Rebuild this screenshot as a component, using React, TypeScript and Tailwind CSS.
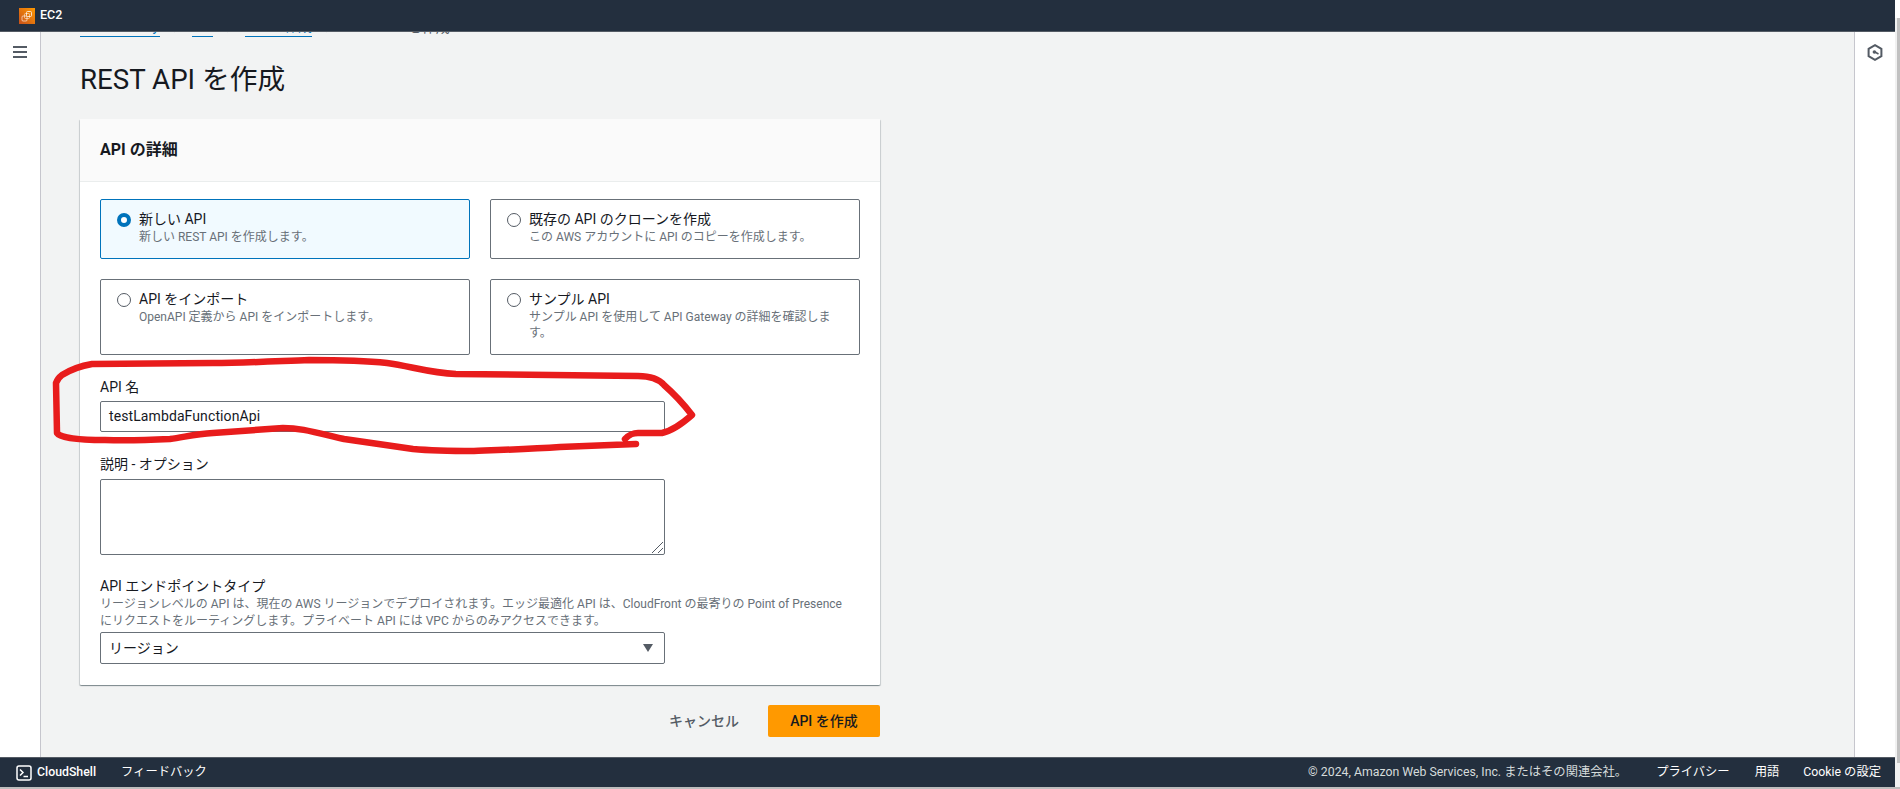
import React from "react";

const jp = { fontFamily: 'Roboto, "Noto Sans CJK JP", sans-serif' };

// orange EC2 service tile
const Ec2Logo = () => (
  <svg width="16" height="16" viewBox="0 0 16 16" aria-hidden="true">
    <defs>
      <linearGradient id="ec2" x1="0" y1="1" x2="1" y2="0">
        <stop offset="0" stopColor="#c8511b" />
        <stop offset="1" stopColor="#ff9900" />
      </linearGradient>
    </defs>
    <rect width="16" height="16" fill="url(#ec2)" />
    <rect x="7.5" y="3.5" width="5" height="5" rx="1" fill="none" stroke="#fff" strokeOpacity="0.75" />
    <rect x="5.5" y="5.5" width="5" height="5" rx="1" fill="none" stroke="#fff" strokeOpacity="0.5" />
    <rect x="3" y="8" width="5" height="5" rx="1" fill="none" stroke="#fff" strokeOpacity="0.6" />
  </svg>
);

const MenuIcon = () => (
  <svg width="14" height="12" viewBox="0 0 14 12" fill="#545b64" aria-hidden="true">
    <rect y="0" width="14" height="2" />
    <rect y="5" width="14" height="2" />
    <rect y="10" width="14" height="2" />
  </svg>
);

const HexIcon = () => (
  <svg width="16" height="17" viewBox="0 0 16 17" fill="none" stroke="#545b64" strokeWidth="2" aria-hidden="true">
    <path d="M8 1.2 14.4 4.8v7.4L8 15.8 1.6 12.2V4.8z" />
    <circle cx="7.4" cy="8" r="1.8" fill="#545b64" stroke="none" />
    <path d="M8 8 11.5 10" strokeWidth="1.5" />
  </svg>
);

const TerminalIcon = () => (
  <svg width="16" height="16" viewBox="0 0 16 16" fill="none" aria-hidden="true">
    <rect x="1" y="1" width="14" height="14" rx="2" fill="#232f3e" stroke="#fff" strokeWidth="1.5" />
    <path d="M4 4.5 7 7.5 4 10.5" stroke="#fff" strokeWidth="1.5" />
    <path d="M7.5 11.5H12" stroke="#fff" strokeWidth="1.5" />
  </svg>
);

const Chevron = () => (
  <svg width="12" height="12" viewBox="0 0 12 12" fill="none" stroke="#687078" strokeWidth="2" aria-hidden="true">
    <path d="M4 1.5 8.5 6 4 10.5" />
  </svg>
);

const RadioCard = ({
  title,
  desc,
  checked = false,
  className = "",
}: {
  title: string;
  desc: string;
  checked?: boolean;
  className?: string;
}) => (
  <div
    className={`flex gap-2 rounded-[2px] border px-[16px] pt-[9px] ${
      checked ? "border-[#0073bb] bg-[#f1faff]" : "border-[#687078] bg-white"
    } ${className}`}
  >
    <span
      className={`mt-[4px] h-[14px] w-[14px] shrink-0 rounded-full bg-white ${
        checked ? "border-[4px] border-[#0073bb]" : "border border-[#545b64]"
      }`}
    />
    <div className="min-w-0">
      <div className="text-[14px] leading-[20px] text-[#16191f]">{title}</div>
      <div className="text-[12px] leading-[16px] text-[#687078]">{desc}</div>
    </div>
  </div>
);

const inputBox = "w-[565px] rounded-[2px] border border-[#687078] bg-white";

export default function App() {
  return (
    <div style={jp} className="relative flex h-[789px] w-[1900px] flex-col overflow-hidden bg-[#bdbdbd]">
      <div className="flex h-[787px] shrink-0">
        <div className="flex w-[1895px] shrink-0 flex-col">
          <header className="flex h-[32px] shrink-0 items-center gap-[5px] border-b border-[#545b64] bg-[#232f3e] pl-[19px]">
            <Ec2Logo />
            <span className="text-[12.5px] font-medium text-white">EC2</span>
          </header>

          <div className="flex min-h-0 flex-1">
            <aside className="flex w-[41px] shrink-0 justify-center border-r border-[#c6c6cd] bg-white pt-[14px]">
              <MenuIcon />
            </aside>

            <main className="min-w-0 flex-1 overflow-hidden bg-[#f2f3f3] pl-[39px]">
              <nav className="-mt-[16px] flex h-[21px] items-center text-[14px] leading-[20px]">
                <a className="w-[80px] whitespace-nowrap border-b border-[#0073bb] text-[#0073bb]">API Gateway</a>
                <span className="mx-[10px]"><Chevron /></span>
                <a className="w-[21px] border-b border-[#0073bb] text-[#0073bb]">API</a>
                <span className="mx-[10px]"><Chevron /></span>
                <a className="w-[67px] whitespace-nowrap border-b border-[#0073bb] text-[#0073bb]">API を作成</a>
                <span className="mx-[10px]"><Chevron /></span>
                <span className="ml-[2px] text-[#545b64]">REST API を作成</span>
              </nav>

              <h1 className="mt-[25px] text-[27.7px] font-normal leading-[36px] text-[#16191f]">REST API を作成</h1>

              <section className="mt-[21px] w-[800px] rounded-[1px] bg-white shadow-[0_1px_1px_0_rgba(0,28,36,0.3),1px_1px_1px_0_rgba(0,28,36,0.15),-1px_1px_1px_0_rgba(0,28,36,0.15)]">
                <div className="flex h-[63px] items-center border-b border-[#eaeded] bg-[#fafafa] px-[20px]">
                  <h2 className="text-[16px] font-bold leading-[20px] text-[#16191f]">API の詳細</h2>
                </div>

                <div className="px-[20px] pb-[21px] pt-[17px]">
                  <div className="grid w-[760px] grid-cols-2 gap-x-[20px] gap-y-[20px]">
                    <RadioCard checked className="h-[60px]" title="新しい API" desc="新しい REST API を作成します。" />
                    <RadioCard className="h-[60px]" title="既存の API のクローンを作成" desc="この AWS アカウントに API のコピーを作成します。" />
                    <RadioCard className="h-[76px]" title="API をインポート" desc="OpenAPI 定義から API をインポートします。" />
                    <RadioCard className="h-[76px]" title="サンプル API" desc="サンプル API を使用して API Gateway の詳細を確認します。" />
                  </div>

                  <label className="mt-[22px] block text-[14px] leading-[20px] text-[#16191f]">API 名</label>
                  <div className={`${inputBox} mt-[4px] flex h-[31px] items-center px-[8px] text-[14px] tracking-[0.1px] text-[#16191f]`}>
                    testLambdaFunctionApi
                  </div>

                  <label className="mt-[22px] block text-[14px] leading-[20px] text-[#16191f]">説明 - オプション</label>
                  <div className={`${inputBox} relative mt-[5px] h-[76px]`}>
                    <svg className="absolute bottom-0 right-0" width="14" height="14" viewBox="0 0 14 14" stroke="#545b64" aria-hidden="true">
                      <path d="M2 13 13 2M8 13l5-5" />
                    </svg>
                  </div>

                  <label className="mt-[21px] block text-[14px] leading-[20px] text-[#16191f]">API エンドポイントタイプ</label>
                  <p className="w-[750px] text-[12px] leading-[17px] text-[#687078]">
                    リージョンレベルの API は、現在の AWS リージョンでデプロイされます。エッジ最適化 API は、CloudFront の最寄りの Point of Presence にリクエストをルーティングします。プライベート API には VPC からのみアクセスできます。
                  </p>
                  <div className={`${inputBox} mt-[2px] flex h-[32px] items-center justify-between px-[8px] text-[14px] text-[#16191f]`}>
                    <span>リージョン</span>
                    <span className="mr-[3px] h-0 w-0 border-x-[5px] border-t-[8px] border-x-transparent border-t-[#545b64]" />
                  </div>
                </div>
              </section>

              <div className="mt-[20px] flex w-[800px] items-center justify-end gap-[29px]">
                <span className="text-[14px] font-medium text-[#545b64]">キャンセル</span>
                <button className="h-[32px] w-[112px] rounded-[2px] bg-[#ff9900] text-[14px] font-medium text-[#16191f]">API を作成</button>
              </div>
            </main>

            <aside className="flex w-[41px] shrink-0 justify-center border-l border-[#c6c6cd] bg-white pt-[12px]">
              <HexIcon />
            </aside>
          </div>

          <footer className="flex h-[30px] shrink-0 items-center border-t border-[#545b64] bg-[#232f3e] pl-[16px] pr-[14px] text-[12.3px] text-[#d5dbdb]">
            <TerminalIcon />
            <span className="ml-[5px] font-medium text-white">CloudShell</span>
            <span className="ml-[25px] text-white">フィードバック</span>
            <span className="ml-auto">© 2024, Amazon Web Services, Inc. またはその関連会社。</span>
            <span className="ml-[29px] text-white">プライバシー</span>
            <span className="ml-[25px] text-white">用語</span>
            <span className="ml-[24px] text-white">Cookie の設定</span>
          </footer>
        </div>

        {/* browser scrollbar */}
        <div className="flex-1 bg-[#f1f1f1]">
          <div className="h-[18px] bg-white" />
          <div className="ml-[2px] h-[745px] bg-[#c1c1c1]" />
        </div>
      </div>

      {/* hand drawn red annotation over the form */}
      <svg className="pointer-events-none absolute left-0 top-0" width="1900" height="789" viewBox="0 0 1900 789" fill="none" aria-hidden="true">
        <path
          d="M625 439 C630 434 633 433 638 433 L662 433 C672 431 684 422 692 415 C682 402 672 392 664 385 C658 378 648 376 638 376 L456 374 C430 373 410 366 387 363 C360 360 335 360 309 360 C280 361 245 363 213 363 L92 364 C80 366 70 370 62 375 C58 378 57 380 56 383 L57 433 C60 438 80 440 105 440 C130 441 150 440 170 439 C185 437 195 434 213 433 L283 428 C300 428 310 431 344 439 L413 449 C435 451 455 451 474 451 C500 450 530 449 560 447 L636 444"
          stroke="#e81c1c"
          strokeWidth="6.5"
          strokeLinecap="round"
          strokeLinejoin="round"
        />
      </svg>
    </div>
  );
}
